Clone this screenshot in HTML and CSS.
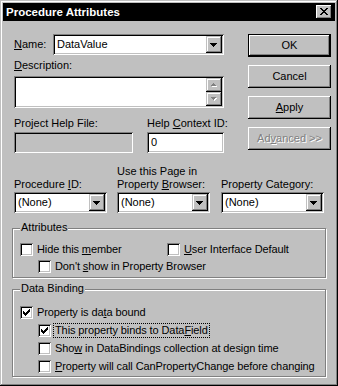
FILE: index.html
```html
<!DOCTYPE html>
<html>
<head>
<meta charset="utf-8">
<link rel="stylesheet" href="styles.css">
</head>
<body>
<div class="window">
  <div class="titlebar">
    <span class="title">Procedure Attributes</span>
    <span class="close">
      <svg width="8" height="7" viewBox="0 0 8 7" shape-rendering="crispEdges">
        <path fill="#000" d="M0 0h2v1H0zM6 0h2v1H6zM1 1h2v1H1zM5 1h2v1H5zM2 2h4v1H2zM3 3h2v1H3zM2 4h4v1H2zM1 5h2v1H1zM5 5h2v1H5zM0 6h2v1H0zM6 6h2v1H6z"/>
      </svg>
    </span>
  </div>
  <div class="client">
    <div class="top">
      <div class="left">
        <div class="name-row">
          <span class="lbl name-lbl"><u>N</u>ame:</span>
          <div class="combo name-combo">
            <span class="val">DataValue</span>
            <span class="drop"><svg width="7" height="4" viewBox="0 0 7 4" shape-rendering="crispEdges"><path fill="#000" d="M0 0h7v1H0zM1 1h5v1H1zM2 2h3v1H2zM3 3h1v1H3z"/></svg></span>
          </div>
        </div>
        <div class="lbl desc-lbl"><u>D</u>escription:</div>
        <div class="memo">
          <div class="memo-text"></div>
          <div class="vscroll">
            <span class="sbtn"><svg width="6" height="4" viewBox="0 0 6 4" shape-rendering="crispEdges"><path fill="#fff" d="M3 1h1v1H3zM2 2h3v1H2zM1 3h5v1H1z"/><path fill="#808080" d="M2 0h1v1H2zM1 1h3v1H1zM0 2h5v1H0z"/></svg></span>
            <span class="sbtn"><svg width="6" height="4" viewBox="0 0 6 4" shape-rendering="crispEdges"><path fill="#fff" d="M1 1h5v1H1zM2 2h3v1H2zM3 3h1v1H3z"/><path fill="#808080" d="M0 0h5v1H0zM1 1h3v1H1zM2 2h1v1H2z"/></svg></span>
          </div>
        </div>
        <div class="help-row">
          <div class="col-a">
            <div class="lbl">Project Help File:</div>
            <div class="edit disabled"></div>
          </div>
          <div class="col-b">
            <div class="lbl">Help <u>C</u>ontext ID:</div>
            <div class="edit"><span class="val">0</span></div>
          </div>
        </div>
      </div>
      <div class="buttons">
        <div class="btn default">OK</div>
        <div class="btn">Cancel</div>
        <div class="btn"><span><u>A</u>pply</span></div>
        <div class="btn disabled-btn"><span>Ad<u>v</u>anced &gt;&gt;</span></div>
      </div>
    </div>

    <div class="combos-row">
      <div class="ccol c1">
        <div class="lbl">Procedure <u>I</u>D:</div>
        <div class="combo">
          <span class="val">(None)</span>
          <span class="drop"><svg width="7" height="4" viewBox="0 0 7 4" shape-rendering="crispEdges"><path fill="#000" d="M0 0h7v1H0zM1 1h5v1H1zM2 2h3v1H2zM3 3h1v1H3z"/></svg></span>
        </div>
      </div>
      <div class="ccol c2">
        <div class="lbl">Use this Page in<br>Property <u>B</u>rowser:</div>
        <div class="combo">
          <span class="val">(None)</span>
          <span class="drop"><svg width="7" height="4" viewBox="0 0 7 4" shape-rendering="crispEdges"><path fill="#000" d="M0 0h7v1H0zM1 1h5v1H1zM2 2h3v1H2zM3 3h1v1H3z"/></svg></span>
        </div>
      </div>
      <div class="ccol c3">
        <div class="lbl">Property Cate<u>g</u>ory:</div>
        <div class="combo">
          <span class="val">(None)</span>
          <span class="drop"><svg width="7" height="4" viewBox="0 0 7 4" shape-rendering="crispEdges"><path fill="#000" d="M0 0h7v1H0zM1 1h5v1H1zM2 2h3v1H2zM3 3h1v1H3z"/></svg></span>
        </div>
      </div>
    </div>

    <div class="group attrs">
      <div class="legend">Attributes</div>
      <div class="row r1">
        <div class="check w147"><span class="cb"></span><span class="ctext">Hide this <u>m</u>ember</span></div>
        <div class="check"><span class="cb"></span><span class="ctext"><u>U</u>ser Interface Default</span></div>
      </div>
      <div class="row">
        <div class="check indent"><span class="cb"></span><span class="ctext">Don't <u>s</u>how in Property Browser</span></div>
      </div>
    </div>

    <div class="group binding">
      <div class="legend">Data Binding</div>
      <div class="row b1">
        <div class="check"><span class="cb"><svg width="7" height="7" viewBox="0 0 7 7" shape-rendering="crispEdges"><path fill="#000" d="M6 0h1v1H6zM5 1h2v1H5zM0 2h1v1H0zM4 2h3v1H4zM0 3h2v1H0zM3 3h3v1H3zM0 4h5v1H0zM1 5h3v1H1zM2 6h1v1H2z"/></svg></span><span class="ctext">Property is da<u>t</u>a bound</span></div>
      </div>
      <div class="row b2">
        <div class="check indent"><span class="cb"><svg width="7" height="7" viewBox="0 0 7 7" shape-rendering="crispEdges"><path fill="#000" d="M6 0h1v1H6zM5 1h2v1H5zM0 2h1v1H0zM4 2h3v1H4zM0 3h2v1H0zM3 3h3v1H3zM0 4h5v1H0zM1 5h3v1H1zM2 6h1v1H2z"/></svg></span><span class="ctext focus">This property binds to Data<u>F</u>ield</span></div>
      </div>
      <div class="row b2">
        <div class="check indent"><span class="cb"></span><span class="ctext">Sho<u>w</u> in DataBindings collection at design time</span></div>
      </div>
      <div class="row b2">
        <div class="check indent"><span class="cb"></span><span class="ctext"><u>P</u>roperty will call CanPropertyChange before changing</span></div>
      </div>
    </div>
  </div>
</div>
</body>
</html>
```

FILE: styles.css
```css
* { box-sizing: border-box; }
html, body { margin: 0; padding: 0; }
body {
  width: 338px;
  height: 386px;
  background: #c0c0c0;
  font-family: "Liberation Sans", Arial, sans-serif;
  font-size: 11px;
  color: #000;
}
u { text-decoration: underline; text-underline-offset: 1px; }

.window {
  width: 338px;
  height: 386px;
  background: #c0c0c0;
  padding: 3px;
  box-shadow: inset -1px -1px #000, inset 1px 1px #c0c0c0, inset -2px -2px #808080, inset 2px 2px #fff;
  display: flex;
  flex-direction: column;
}

.titlebar {
  height: 18px;
  background: #000;
  display: flex;
  align-items: center;
  padding: 0 3px 0 3px;
  flex: none;
}
.title {
  color: #fff;
  font-weight: bold;
  font-size: 11.5px;
  line-height: 14px;
}
.close {
  margin-left: auto;
  width: 16px;
  height: 14px;
  background: #c0c0c0;
  box-shadow: inset -1px -1px #000, inset 1px 1px #fff, inset -2px -2px #808080;
  display: flex;
  align-items: center;
  justify-content: center;
  padding: 0 1px 1px 0;
}
.close svg { display: block; }

.client {
  padding: 13px 0 0 11px;
  display: flex;
  flex-direction: column;
}

.lbl { line-height: 13px; white-space: nowrap; }

.top { display: flex; }
.left { width: 210px; display: flex; flex-direction: column; }

.name-row { display: flex; align-items: center; height: 21px; }
.name-lbl { width: 39px; }
.name-combo { width: 171px; }

.combo {
  height: 21px;
  background: #fff;
  box-shadow: inset 1px 1px #808080, inset -1px -1px #fff, inset 2px 2px #000, inset -2px -2px #c0c0c0;
  padding: 2px;
  display: flex;
  align-items: center;
}
.combo .val { flex: 1; padding-left: 2px; line-height: 13px; white-space: nowrap; overflow: hidden; }
.drop {
  width: 16px;
  height: 17px;
  background: #c0c0c0;
  box-shadow: inset -1px -1px #000, inset 1px 1px #c0c0c0, inset -2px -2px #808080, inset 2px 2px #fff;
  display: flex;
  align-items: center;
  justify-content: center;
  padding: 0 1px 0 0;
  flex: none;
}
.drop svg { display: block; }

.desc-lbl { margin-top: 4px; }

.memo {
  margin-top: 4px;
  height: 32px;
  background: #fff;
  box-shadow: inset 1px 1px #808080, inset -1px -1px #fff, inset 2px 2px #000, inset -2px -2px #c0c0c0;
  padding: 2px;
  display: flex;
}
.memo-text { flex: 1; }
.vscroll { width: 16px; display: flex; flex-direction: column; }
.sbtn {
  height: 14px;
  background: #c0c0c0;
  box-shadow: inset -1px -1px #000, inset 1px 1px #c0c0c0, inset -2px -2px #808080, inset 2px 2px #fff;
  display: flex;
  align-items: center;
  justify-content: center;
}
.sbtn svg { display: block; }

.help-row { display: flex; margin-top: 9px; }
.col-a { width: 119px; display: flex; flex-direction: column; }
.col-b { width: 77px; margin-left: 14px; display: flex; flex-direction: column; }
.edit {
  margin-top: 2px;
  height: 21px;
  background: #fff;
  box-shadow: inset 1px 1px #808080, inset -1px -1px #fff, inset 2px 2px #000, inset -2px -2px #c0c0c0;
  padding: 2px 2px 2px 4px;
  display: flex;
  align-items: center;
  line-height: 13px;
}
.edit.disabled { background: #c0c0c0; }

.buttons {
  margin-left: 24px;
  width: 83px;
  display: flex;
  flex-direction: column;
  gap: 8px;
}
.btn {
  height: 23px;
  background: #c0c0c0;
  box-shadow: inset -1px -1px #000, inset 1px 1px #fff, inset -2px -2px #808080;
  display: flex;
  align-items: center;
  justify-content: center;
  line-height: 13px;
  padding-bottom: 1px;
}
.btn.default {
  box-shadow: inset 0 0 0 1px #000, inset -2px -2px #000, inset 2px 2px #fff, inset -3px -3px #808080;
}
.disabled-btn { color: #808080; text-shadow: 1px 1px 0 #fff; }

.combos-row {
  margin-top: 12px;
  display: flex;
  align-items: flex-end;
}
.ccol { display: flex; flex-direction: column; }
.ccol .lbl { margin-bottom: 1px; }
.c1 { width: 93px; }
.c2 { width: 93px; margin-left: 10px; }
.c3 { width: 103px; margin-left: 11px; }

.group {
  margin-left: -2px;
  width: 314px;
  border: 1px solid #808080;
  box-shadow: inset 1px 1px #fff, 1px 1px 0 #fff;
  display: flex;
  flex-direction: column;
}
.attrs { margin-top: 15px; padding: 0 0 2px 7px; }
.binding { margin-top: 11px; padding: 0 0 1px 7px; }
.legend {
  margin-top: -8px;
  margin-left: 0;
  padding: 0 1px;
  background: #c0c0c0;
  line-height: 13px;
  align-self: flex-start;
}
.row { display: flex; height: 17px; align-items: center; }
.attrs .r1 { margin-top: 7px; }
.binding .row { height: 18px; }
.binding .b1 { margin-top: 8px; }

.check { display: flex; align-items: center; }
.w147 { width: 147px; }
.indent { margin-left: 18px; }
.cb {
  width: 13px;
  height: 13px;
  flex: none;
  background: #fff;
  box-shadow: inset 1px 1px #808080, inset -1px -1px #fff, inset 2px 2px #000, inset -2px -2px #c0c0c0;
  padding: 3px;
}
.cb svg { display: block; }
.ctext {
  margin-left: 2px;
  border: 1px solid transparent;
  padding: 0 1px;
  line-height: 13px;
  white-space: nowrap;
  letter-spacing: -0.1px;
}
.ctext.focus { border: 1px dotted #000; }
```
